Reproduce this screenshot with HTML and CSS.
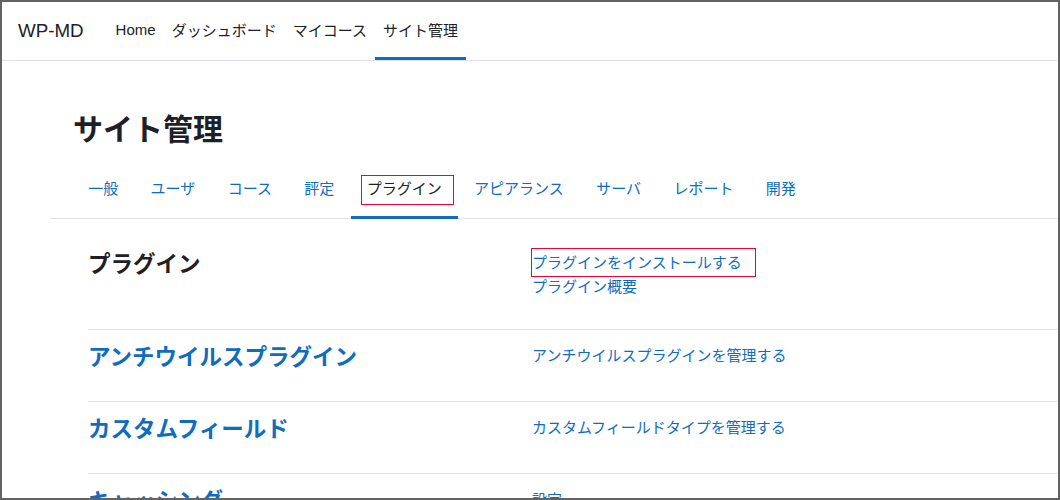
FILE: index.html
```html
<!DOCTYPE html>
<html lang="ja">
<head>
    <meta charset="UTF-8">
    <title>サイト管理 | WP-MD</title>
    <link rel="stylesheet" href="styles.css">
</head>
<body>

<nav class="navbar">
    <a class="brand" href="#">WP-MD</a>
    <ul class="primary-nav">
        <li><a href="#">Home</a></li>
        <li><a href="#">ダッシュボード</a></li>
        <li><a href="#">マイコース</a></li>
        <li><a href="#" class="active">サイト管理</a></li>
    </ul>
</nav>

<div class="page">
    <h2 class="page-title">サイト管理</h2>

    <ul class="tabs">
        <li><a href="#">一般</a></li>
        <li><a href="#">ユーザ</a></li>
        <li><a href="#">コース</a></li>
        <li><a href="#">評定</a></li>
        <li><a href="#" class="active"><span class="marked marked-tab">プラグイン</span></a></li>
        <li><a href="#">アピアランス</a></li>
        <li><a href="#">サーバ</a></li>
        <li><a href="#">レポート</a></li>
        <li><a href="#">開発</a></li>
    </ul>

    <div class="admin-list">
        <div class="admin-row">
            <h3 class="row-title plain">プラグイン</h3>
            <div class="row-links">
                <a href="#"><span class="marked marked-link">プラグインをインストールする</span></a>
                <a href="#">プラグイン概要</a>
            </div>
        </div>
        <div class="admin-row">
            <h3 class="row-title"><a href="#">アンチウイルスプラグイン</a></h3>
            <div class="row-links">
                <a href="#">アンチウイルスプラグインを管理する</a>
            </div>
        </div>
        <div class="admin-row">
            <h3 class="row-title"><a href="#">カスタムフィールド</a></h3>
            <div class="row-links">
                <a href="#">カスタムフィールドタイプを管理する</a>
            </div>
        </div>
        <div class="admin-row">
            <h3 class="row-title"><a href="#">キャッシング</a></h3>
            <div class="row-links">
                <a href="#">設定</a>
            </div>
        </div>
    </div>
</div>

</body>
</html>
```

FILE: styles.css
```css
html {
    height: 100%;
}
body {
    font-family: "Liberation Sans", "Noto Sans CJK JP", sans-serif;
    color: #1d2125;
    background: #fff;
    margin: 0;
    height: 500px;
    box-sizing: border-box;
    border: 2px solid #636363;
    overflow: hidden;
}
a {
    color: #0f6cbf;
    text-decoration: none;
}
ul {
    list-style: none;
    margin: 0;
    padding: 0;
}

/* top bar */
.navbar {
    display: flex;
    height: 58px;
    padding-left: 16px;
    border-bottom: 1px solid #dee2e6;
}
.brand {
    color: #1d2125;
    font-size: 18.75px;
    line-height: 58px;
    margin-right: 24px;
}
.primary-nav {
    display: flex;
}
.primary-nav a {
    display: flex;
    align-items: center;
    height: 55px;
    padding: 0 8px;
    font-size: 15px;
    color: #1d2125;
    border-bottom: 3px solid transparent;
}
.primary-nav a.active {
    border-bottom-color: #0f6cbf;
}

/* page header + tabs */
.page {
    padding-left: 48px;
}
.page-title {
    font-size: 30px;
    font-weight: 700;
    line-height: 36px;
    margin: 51px 0 19px 23px;
}
.tabs {
    display: flex;
    padding-left: 22px;
    border-bottom: 1px solid #dee2e6;
}
.tabs a {
    display: block;
    font-size: 15px;
    line-height: 22.5px;
    padding: 11px 16.2px 15px;
    border-bottom: 3px solid transparent;
    margin-bottom: -1px;
}
.tabs a.active {
    color: #1d2125;
    border-bottom-color: #0f6cbf;
}

/* red highlight boxes */
.marked {
    position: relative;
    display: inline-block;
}
.marked::after {
    content: "";
    position: absolute;
    border: 1px solid #e8063c;
}
.marked-tab::after {
    top: -3px;
    bottom: -4px;
    left: -6px;
    right: -12px;
}
.marked-link::after {
    top: -3px;
    bottom: -2px;
    left: -1px;
    right: -14px;
}

/* category list */
.admin-list {
    margin: 18px 0 0 38px;
}
.admin-row {
    display: grid;
    grid-template-columns: 444px 1fr;
    padding: 14px 0 30px;
    border-top: 1px solid #dee2e6;
}
.admin-row:first-child {
    border-top: none;
}
.row-title {
    margin: 0;
    font-size: 22.5px;
    font-weight: 700;
    line-height: 27px;
}
.row-title.plain {
    color: #1d2125;
}
.row-links a {
    display: block;
    font-size: 15px;
    line-height: 24px;
}
```
